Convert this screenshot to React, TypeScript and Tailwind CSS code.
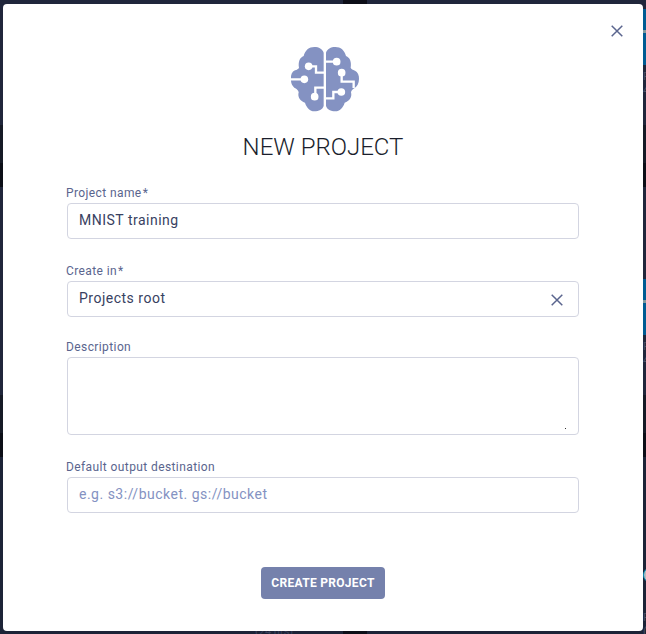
import type { ReactNode } from "react";

function BrainIcon() {
  return (
    <svg className="ml-1" width="90" height="80" viewBox="0 0 270 240" fill="none" aria-hidden="true">
      <g fill="#8492c2">
        <path d="M131 38C127 27 117 21 103 21C87 21 75 31 71 48C59 52 54 67 57 83C55 87 51 89 45 91C36 95 32 105 33 117C32 130 38 140 46 145C51 148 55 151 56 157C52 172 61 184 75 188C80 204 90 214 103 214C117 214 127 209 131 198Z" />
        <path d="M138 38C142 27 152 21 166 21C182 21 194 31 198 48C210 52 215 67 212 83C214 87 218 89 225 92C233 96 238 106 237 117C237 130 231 140 223 145C218 148 214 151 213 157C217 172 208 184 194 188C189 204 179 214 166 214C152 214 142 209 138 198Z" />
      </g>
      <g stroke="#fff" strokeWidth="7">
        <path d="M85 79H108V98H132M30 118H73M106 170V143H132M137 65H170M185 98V125H221V144M184 156H160V175H137" />
      </g>
      <g fill="#fff">
        <circle cx="86" cy="79" r="11.5" />
        <circle cx="73" cy="118" r="11.5" />
        <circle cx="104" cy="170" r="11.5" />
        <circle cx="170" cy="65" r="11.5" />
        <circle cx="185" cy="98" r="11.5" />
        <circle cx="184" cy="156" r="11.5" />
      </g>
    </svg>
  );
}

function CloseIcon() {
  return (
    <svg width="12" height="12" viewBox="0 0 12 12" fill="none" stroke="#5a658e" strokeWidth="1.5" aria-hidden="true">
      <path d="M0.7 0.7L11.3 11.3M11.3 0.7L0.7 11.3" />
    </svg>
  );
}

interface FieldProps {
  label: string;
  required?: boolean;
  children: ReactNode;
  className: string;
}

function Field({ label, required, children, className }: FieldProps) {
  return (
    <label className={`block ${className}`}>
      <span className="-ml-px block h-[17px] text-xs leading-[14px] tracking-[0.4px] text-[#5a658e]">
        {label}
        {required && <span className="ml-px">*</span>}
      </span>
      {children}
    </label>
  );
}

const inputClass =
  "block h-9 w-full rounded border border-[#d3d5e1] bg-white px-[11px] pb-[3px] text-sm tracking-[0.5px] text-[#384161] outline-none placeholder:text-[#8492c2] placeholder:opacity-100";

function BackdropCard({ count }: { count: string }) {
  return (
    <div className="relative h-[246px] overflow-hidden bg-[#20263b]">
      <div className="absolute right-0 bottom-0 left-0 h-[38px] bg-[#161a26]" />
      <div className="absolute top-[92px] left-[276px] h-14 w-14 bg-[#005b93]" />
      <div className="absolute top-[113px] left-[276px] h-[3px] w-14 bg-[#81979d]" />
      <div className="absolute top-[153px] left-[276px] text-[11px] leading-[14px] whitespace-pre text-[#484d65]">
        {"P\n" + count}
      </div>
    </div>
  );
}

function Backdrop() {
  return (
    <div className="absolute inset-0 overflow-hidden bg-[#0c0e17]" aria-hidden="true">
      <div className="-mt-[83px] -ml-[20px] grid grid-cols-[363px_363px] gap-6">
        <div className="h-[246px] border-b-[38px] border-[#161a26] bg-[#20263b]" />
        <BackdropCard count="4" />
        <div className="h-[246px] border-b-[38px] border-[#161a26] bg-[#20263b]" />
        <BackdropCard count="4" />
        <div className="relative h-[246px] bg-[#1c2337]">
          <span className="absolute top-[168px] left-[275px] text-[11px] leading-[14px] text-[#38405b]">(24 hrs)</span>
        </div>
        <div className="relative h-[246px] bg-[#1c2337]">
          <div className="absolute top-[110px] left-[276px] h-4 w-4 rounded-full border border-[#008dbc] bg-[#b5bcbf]" />
          <span className="absolute top-[154px] left-[276px] text-[11px] leading-[14px] whitespace-pre text-[#484d65]">{"P\n(24"}</span>
        </div>
      </div>
    </div>
  );
}

export default function App() {
  return (
    <div className="relative h-[634px] w-[646px] overflow-hidden pt-1 pl-[3px] font-['Roboto',sans-serif]">
      <Backdrop />
      <section className="relative flex h-[627px] w-[640px] flex-col rounded bg-white" role="dialog" aria-label="New project">
        <button type="button" aria-label="Close" className="absolute top-[21px] right-5">
          <CloseIcon />
        </button>
        <header className="flex flex-col items-center pt-9">
          <BrainIcon />
          <h1 className="mt-3 h-8 text-2xl leading-[30px] font-light text-[#1a1e2c]">NEW PROJECT</h1>
        </header>
        <form className="flex flex-col px-16 pt-[22px]">
          <Field label="Project name" required className="h-[78px]">
            <input className={inputClass} defaultValue="MNIST training" />
          </Field>
          <Field label="Create in" required className="relative h-[76px]">
            <input className={inputClass} defaultValue="Projects root" />
            <span className="absolute top-[30px] right-4">
              <CloseIcon />
            </span>
          </Field>
          <Field label="Description" className="relative h-[120px]">
            <textarea className="block h-[78px] w-full resize-none rounded border border-[#d3d5e1] bg-white p-[11px] text-sm text-[#384161] outline-none" />
            <span className="absolute top-[88px] right-[13px] h-px w-px bg-[#333]" />
          </Field>
          <Field label="Default output destination" className="h-[107px]">
            <input className={inputClass} placeholder="e.g. s3://bucket. gs://bucket" />
          </Field>
          <button type="button" className="h-8 w-[124px] self-center rounded bg-[#7581ac] pb-px text-xs font-bold tracking-[0.3px] whitespace-nowrap text-white">
            CREATE PROJECT
          </button>
        </form>
      </section>
    </div>
  );
}
